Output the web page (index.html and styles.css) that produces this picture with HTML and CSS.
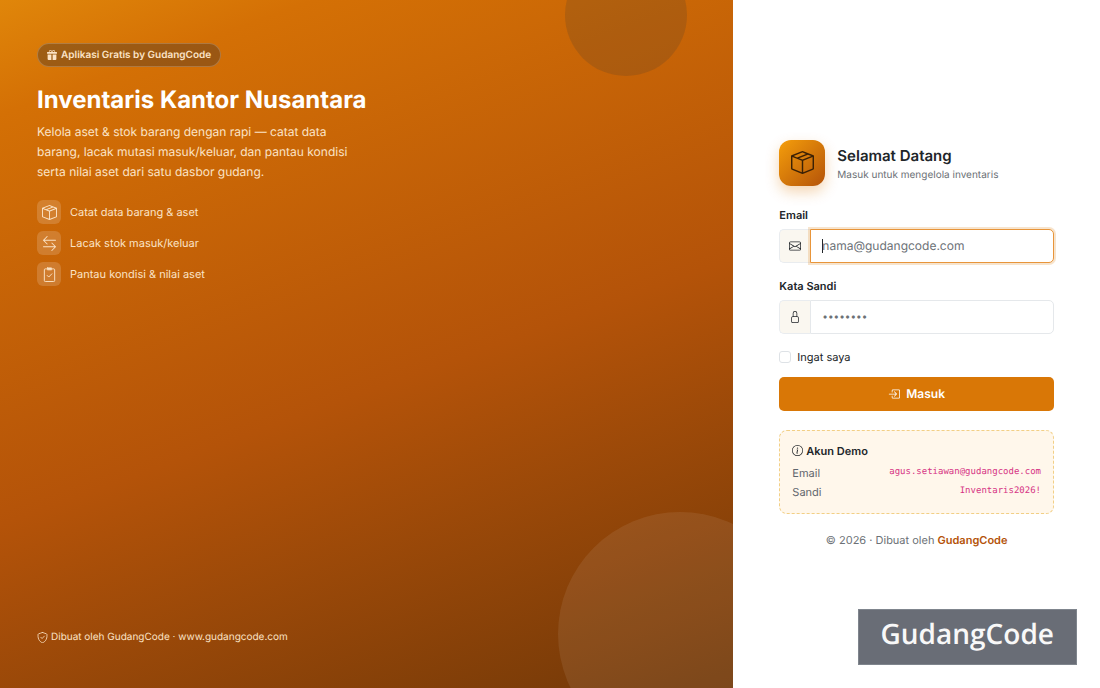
FILE: index.html
```html
<!DOCTYPE html>
<html lang="id">
<head>
    <meta charset="UTF-8">
    <meta name="viewport" content="width=device-width, initial-scale=1.0">
    <title>Masuk - Inventaris Kantor Nusantara</title>
    <link rel="stylesheet" href="styles.css">
</head>
<body>
    <div class="login">
        <section class="brand">
            <div class="circle circle-top"></div>
            <div class="circle circle-bottom"></div>
            <div class="brand-main">
                <span class="pill">
                    <svg class="icon-xs" viewBox="0 0 16 16" fill="currentColor" aria-hidden="true"><path d="M3 2.5a2.5 2.5 0 0 1 5 0 2.5 2.5 0 0 1 5 0v.006c0 .07 0 .27-.038.494H15a1 1 0 0 1 1 1v1a1 1 0 0 1-1 1H1a1 1 0 0 1-1-1V4a1 1 0 0 1 1-1h2.038A3 3 0 0 1 3 2.506zm1.068.5H7v-.5a1.5 1.5 0 1 0-3 0c0 .085.002.274.045.43zM9 3h2.932l.023-.07c.043-.156.045-.345.045-.43a1.5 1.5 0 0 0-3 0zm6 4v7.5a1.5 1.5 0 0 1-1.5 1.5H9V7zM2.5 16A1.5 1.5 0 0 1 1 14.5V7h6v9z"/></svg>
                    Aplikasi Gratis by GudangCode
                </span>
                <h1>Inventaris Kantor Nusantara</h1>
                <p class="lead">Kelola aset &amp; stok barang dengan rapi — catat data barang, lacak mutasi masuk/keluar, dan pantau kondisi serta nilai aset dari satu dasbor gudang.</p>
                <ul class="features">
                    <li>
                        <span class="feature-icon"><svg class="icon-md" viewBox="0 0 16 16" fill="currentColor" aria-hidden="true"><path d="M8.186 1.113a.5.5 0 0 0-.372 0L1.846 3.5l2.404.961L10.404 2zm3.564 1.426L5.596 5 8 5.961 14.154 3.5zm3.25 1.7-6.5 2.6v7.922l6.5-2.6V4.24zM7.5 14.762V6.838L1 4.239v7.923zM7.443.184a1.5 1.5 0 0 1 1.114 0l7.129 2.852A.5.5 0 0 1 16 3.5v8.662a1 1 0 0 1-.629.928l-7.185 2.874a.5.5 0 0 1-.372 0L.63 13.09a1 1 0 0 1-.63-.928V3.5a.5.5 0 0 1 .314-.464z"/></svg></span>
                        Catat data barang &amp; aset
                    </li>
                    <li>
                        <span class="feature-icon"><svg class="icon-md" viewBox="0 0 16 16" fill="currentColor" aria-hidden="true"><path d="M1 11.5a.5.5 0 0 0 .5.5h11.793l-3.147 3.146a.5.5 0 0 0 .708.708l4-4a.5.5 0 0 0 0-.708l-4-4a.5.5 0 0 0-.708.708L13.293 11H1.5a.5.5 0 0 0-.5.5m14-7a.5.5 0 0 1-.5.5H2.707l3.147 3.146a.5.5 0 1 1-.708.708l-4-4a.5.5 0 0 1 0-.708l4-4a.5.5 0 1 1 .708.708L2.707 4H14.5a.5.5 0 0 1 .5.5"/></svg></span>
                        Lacak stok masuk/keluar
                    </li>
                    <li>
                        <span class="feature-icon"><svg class="icon-md" viewBox="0 0 16 16" fill="none" stroke="currentColor" stroke-linecap="round" stroke-linejoin="round" aria-hidden="true"><path d="M4.5 2h-1a1 1 0 0 0-1 1v11.5a1 1 0 0 0 1 1h9a1 1 0 0 0 1-1V3a1 1 0 0 0-1-1h-1M5.5 9l1.7 1.7 3.3-3.4"/><path fill="currentColor" d="M6 1h4a.5.5 0 0 1 .5.5v1a.5.5 0 0 1-.5.5H6a.5.5 0 0 1-.5-.5v-1A.5.5 0 0 1 6 1z"/></svg></span>
                        Pantau kondisi &amp; nilai aset
                    </li>
                </ul>
            </div>
            <p class="brand-foot">
                <svg class="icon-sm" viewBox="0 0 16 16" fill="none" stroke="currentColor" stroke-width="1.2" stroke-linecap="round" stroke-linejoin="round" aria-hidden="true"><path d="M8 .6C6.6 1.3 4.2 2.1 2.3 2.6c-.4.1-.6.4-.7.7C1 7.5 2.2 10.6 3.8 12.7 5.2 14.4 7 15.5 8 15.5s2.8-1.1 4.2-2.8c1.6-2.1 2.8-5.2 2.2-9.4-.1-.3-.3-.6-.7-.7C11.8 2.1 9.4 1.3 8 .6zM5.5 7.6l1.9 1.9 3.3-3.5"/></svg>
                Dibuat oleh GudangCode · www.gudangcode.com
            </p>
        </section>

        <main class="panel">
            <header class="panel-head">
                <div class="logo"><svg class="icon-lg" viewBox="0 0 16 16" fill="currentColor" aria-hidden="true"><path d="M8.186 1.113a.5.5 0 0 0-.372 0L1.846 3.5l2.404.961L10.404 2zm3.564 1.426L5.596 5 8 5.961 14.154 3.5zm3.25 1.7-6.5 2.6v7.922l6.5-2.6V4.24zM7.5 14.762V6.838L1 4.239v7.923zM7.443.184a1.5 1.5 0 0 1 1.114 0l7.129 2.852A.5.5 0 0 1 16 3.5v8.662a1 1 0 0 1-.629.928l-7.185 2.874a.5.5 0 0 1-.372 0L.63 13.09a1 1 0 0 1-.63-.928V3.5a.5.5 0 0 1 .314-.464z"/></svg></div>
                <div>
                    <h2>Selamat Datang</h2>
                    <p class="muted">Masuk untuk mengelola inventaris</p>
                </div>
            </header>

            <form class="form">
                <label class="label" for="email">Email</label>
                <div class="group">
                    <span class="addon"><svg class="icon-in" viewBox="0 0 16 16" fill="currentColor" aria-hidden="true"><path d="M0 4a2 2 0 0 1 2-2h12a2 2 0 0 1 2 2v8a2 2 0 0 1-2 2H2a2 2 0 0 1-2-2zm2-1a1 1 0 0 0-1 1v.217l7 4.2 7-4.2V4a1 1 0 0 0-1-1zm13 2.383-4.708 2.825L15 11.105zm-.034 6.876-5.64-3.471L8 9.583l-1.326-.795-5.64 3.47A1 1 0 0 0 2 13h12a1 1 0 0 0 .966-.741M1 11.105l4.708-2.897L1 5.383z"/></svg></span>
                    <input class="control active" type="email" id="email" placeholder="nama@gudangcode.com">
                </div>
                <label class="label" for="password">Kata Sandi</label>
                <div class="group">
                    <span class="addon"><svg class="icon-in" viewBox="0 0 16 16" fill="currentColor" aria-hidden="true"><path d="M8 1a2 2 0 0 1 2 2v4H6V3a2 2 0 0 1 2-2m3 6V3a3 3 0 0 0-6 0v4a2 2 0 0 0-2 2v5a2 2 0 0 0 2 2h6a2 2 0 0 0 2-2V9a2 2 0 0 0-2-2M5 8h6a1 1 0 0 1 1 1v5a1 1 0 0 1-1 1H5a1 1 0 0 1-1-1V9a1 1 0 0 1 1-1"/></svg></span>
                    <input class="control password" type="password" id="password" placeholder="••••••••">
                </div>
                <div class="check">
                    <input type="checkbox" id="remember">
                    <label for="remember">Ingat saya</label>
                </div>
                <button class="btn" type="submit">
                    <svg class="icon-in" viewBox="0 0 16 16" fill="currentColor" aria-hidden="true"><path d="M6 3.5a.5.5 0 0 1 .5-.5h8a.5.5 0 0 1 .5.5v9a.5.5 0 0 1-.5.5h-8a.5.5 0 0 1-.5-.5v-2a.5.5 0 0 0-1 0v2A1.5 1.5 0 0 0 6.5 14h8a1.5 1.5 0 0 0 1.5-1.5v-9A1.5 1.5 0 0 0 14.5 2h-8A1.5 1.5 0 0 0 5 3.5v2a.5.5 0 0 0 1 0z"/><path d="M11.854 8.354a.5.5 0 0 0 0-.708l-3-3a.5.5 0 1 0-.708.708L10.293 7.5H1.5a.5.5 0 0 0 0 1h8.793l-2.147 2.146a.5.5 0 0 0 .708.708z"/></svg>
                    Masuk
                </button>
            </form>

            <div class="demo">
                <h3><svg class="icon-sm" viewBox="0 0 16 16" fill="currentColor" aria-hidden="true"><path d="M8 15A7 7 0 1 1 8 1a7 7 0 0 1 0 14m0 1A8 8 0 1 0 8 0a8 8 0 0 0 0 16"/><path d="m8.93 6.588-2.29.287-.082.38.45.083c.294.07.352.176.288.469l-.738 3.468c-.194.897.105 1.319.808 1.319.545 0 1.178-.252 1.465-.598l.088-.416c-.2.176-.492.246-.686.246-.275 0-.375-.193-.304-.533zM9 4.5a1 1 0 1 1-2 0 1 1 0 0 1 2 0"/></svg>Akun Demo</h3>
                <div class="demo-row"><span>Email</span><code>agus.setiawan@gudangcode.com</code></div>
                <div class="demo-row"><span>Sandi</span><code>Inventaris2026!</code></div>
            </div>
            <p class="copy">© 2026 · Dibuat oleh <a href="#">GudangCode</a></p>
        </main>
    </div>
    <div class="watermark">GudangCode</div>
</body>
</html>
```
FILE: styles.css
```css
*{
    box-sizing: border-box;
}
body{
    margin: 0;
    font-family: Inter, "Liberation Sans", sans-serif;
    font-size: 12px;
    line-height: 18px;
    text-rendering: geometricPrecision;
    color: #212529;
    background: #fff;
}
h1, h2, h3, p, ul{
    margin: 0;
    padding: 0;
}
svg{
    display: block;
    flex: none;
}
.icon-xs{
    width: 10px;
    height: 10px;
}
.icon-sm{
    width: 11px;
    height: 11px;
}
.icon-in{
    width: 12px;
    height: 12px;
}
.icon-md{
    width: 15px;
    height: 15px;
}
.icon-lg{
    width: 23px;
    height: 23px;
}

.login{
    display: grid;
    grid-template-columns: 2fr 1fr;
    min-height: 100vh;
}

/* left side */
.brand{
    position: relative;
    overflow: hidden;
    display: flex;
    flex-direction: column;
    justify-content: space-between;
    padding: 43px 37px;
    color: #fbe3c6;
    background: linear-gradient(160deg, #e0860a 0%, #d47005 12%, #b45309 55%, #713808 100%);
}
.circle{
    position: absolute;
    border-radius: 50%;
}
.circle-top{
    width: 122px;
    height: 122px;
    top: -46px;
    right: 46px;
    background: rgba(69, 60, 52, 0.2);
}
.circle-bottom{
    width: 244px;
    height: 244px;
    right: -69px;
    bottom: -68px;
    background: rgba(255, 255, 255, 0.08);
}
.brand-main{
    position: relative;
}
.pill{
    display: inline-flex;
    align-items: center;
    gap: 4px;
    height: 24px;
    padding: 0 9px;
    border: 1px solid rgba(255, 255, 255, 0.2);
    border-radius: 12px;
    background: rgba(69, 52, 40, 0.4);
    font-size: 10px;
    font-weight: 600;
}
h1{
    margin-top: 17px;
    font-size: 24px;
    line-height: 32px;
    font-weight: 700;
    font-variation-settings: "opsz" 32;
    color: #fff;
}
.lead{
    max-width: 320px;
    margin-top: 6px;
    line-height: 20px;
}
.features{
    display: flex;
    flex-direction: column;
    gap: 7px;
    margin-top: 18px;
    list-style: none;
}
.features li{
    display: flex;
    align-items: center;
    gap: 9px;
    font-size: 11px;
}
.feature-icon{
    display: flex;
    align-items: center;
    justify-content: center;
    width: 24px;
    height: 24px;
    border-radius: 6px;
    background: rgba(255, 255, 255, 0.16);
}
.brand-foot{
    position: relative;
    display: flex;
    align-items: center;
    gap: 3px;
    font-size: 10px;
    line-height: 16px;
}

/* right side */
.panel{
    display: flex;
    flex-direction: column;
    justify-content: center;
    padding: 46px;
}
.panel-head{
    display: flex;
    align-items: center;
    gap: 12px;
}
.logo{
    display: flex;
    align-items: center;
    justify-content: center;
    width: 46px;
    height: 46px;
    border-radius: 12px;
    color: #3b2106;
    background: linear-gradient(135deg, #f59e0b, #b45309);
    box-shadow: 0 6px 14px rgba(217, 119, 6, 0.3);
}
h2{
    padding-top: 4px;
    font-size: 15px;
    line-height: 20px;
    font-weight: 600;
}
.muted{
    font-size: 10px;
    color: #6c7176;
}
.form{
    margin-top: 21px;
}
.label{
    display: block;
    margin-bottom: 6px;
    font-size: 11px;
    line-height: 16px;
    font-weight: 600;
}
.group{
    display: flex;
    height: 34px;
    margin-bottom: 15px;
}
.addon{
    display: flex;
    align-items: center;
    justify-content: center;
    width: 31px;
    border: 1px solid #e9ecef;
    border-right: 0;
    border-radius: 5px 0 0 5px;
    background: #faf7f0;
}
.control{
    flex: 1;
    min-width: 0;
    padding: 0 11px;
    border: 1px solid #e5e8eb;
    border-radius: 0 5px 5px 0;
    outline: 0;
    font: inherit;
    text-rendering: inherit;
    color: #212529;
    background: #fff;
}
.control::placeholder{
    color: #6c7176;
    opacity: 1;
}
.password{
    font-size: 10px;
}
.active{
    border-color: #e8953a;
    box-shadow: 0 0 0 2px rgba(217, 119, 6, 0.2);
    /* caret */
    background: linear-gradient(#212529, #212529) 11px center / 1px 14px no-repeat #fff;
}
.check{
    display: flex;
    align-items: center;
    gap: 6px;
    margin-bottom: 12px;
    font-size: 11px;
    line-height: 16px;
}
.check input{
    appearance: none;
    width: 12px;
    height: 12px;
    margin: 0;
    border: 1px solid #dee2e6;
    border-radius: 3px;
    background: #fff;
}
.btn{
    display: flex;
    align-items: center;
    justify-content: center;
    gap: 6px;
    width: 100%;
    height: 34px;
    border: 0;
    border-radius: 5px;
    font: inherit;
    font-weight: 600;
    text-rendering: inherit;
    color: #fff;
    background: #d97706;
}
.demo{
    margin-top: 19px;
    padding: 11px 12px;
    border: 1px dashed #f2cf85;
    border-radius: 8px;
    background: #fff7eb;
    font-size: 11px;
}
.demo h3{
    display: flex;
    align-items: center;
    gap: 3px;
    margin-bottom: 4px;
    font-size: 11px;
    line-height: 18px;
    font-weight: 600;
}
.demo-row{
    display: flex;
    justify-content: space-between;
    line-height: 19px;
    color: #5f666d;
}
.demo-row code{
    font-family: "DejaVu Sans Mono", monospace;
    font-size: 9px;
    line-height: 16px;
    color: #d63384;
}
.copy{
    margin-top: 17px;
    font-size: 11px;
    text-align: center;
    color: #6c7176;
}
.copy a{
    font-weight: 600;
    color: #b45309;
    text-decoration: none;
}

.watermark{
    position: fixed;
    right: 23px;
    bottom: 23px;
    padding: 6px 22px 12px;
    border: 1px solid #7f858d;
    background: #696d76;
    color: #f8f8f8;
    font-family: "Open Sans", sans-serif;
    font-size: 28px;
    line-height: 36px;
    font-weight: 600;
}
```
